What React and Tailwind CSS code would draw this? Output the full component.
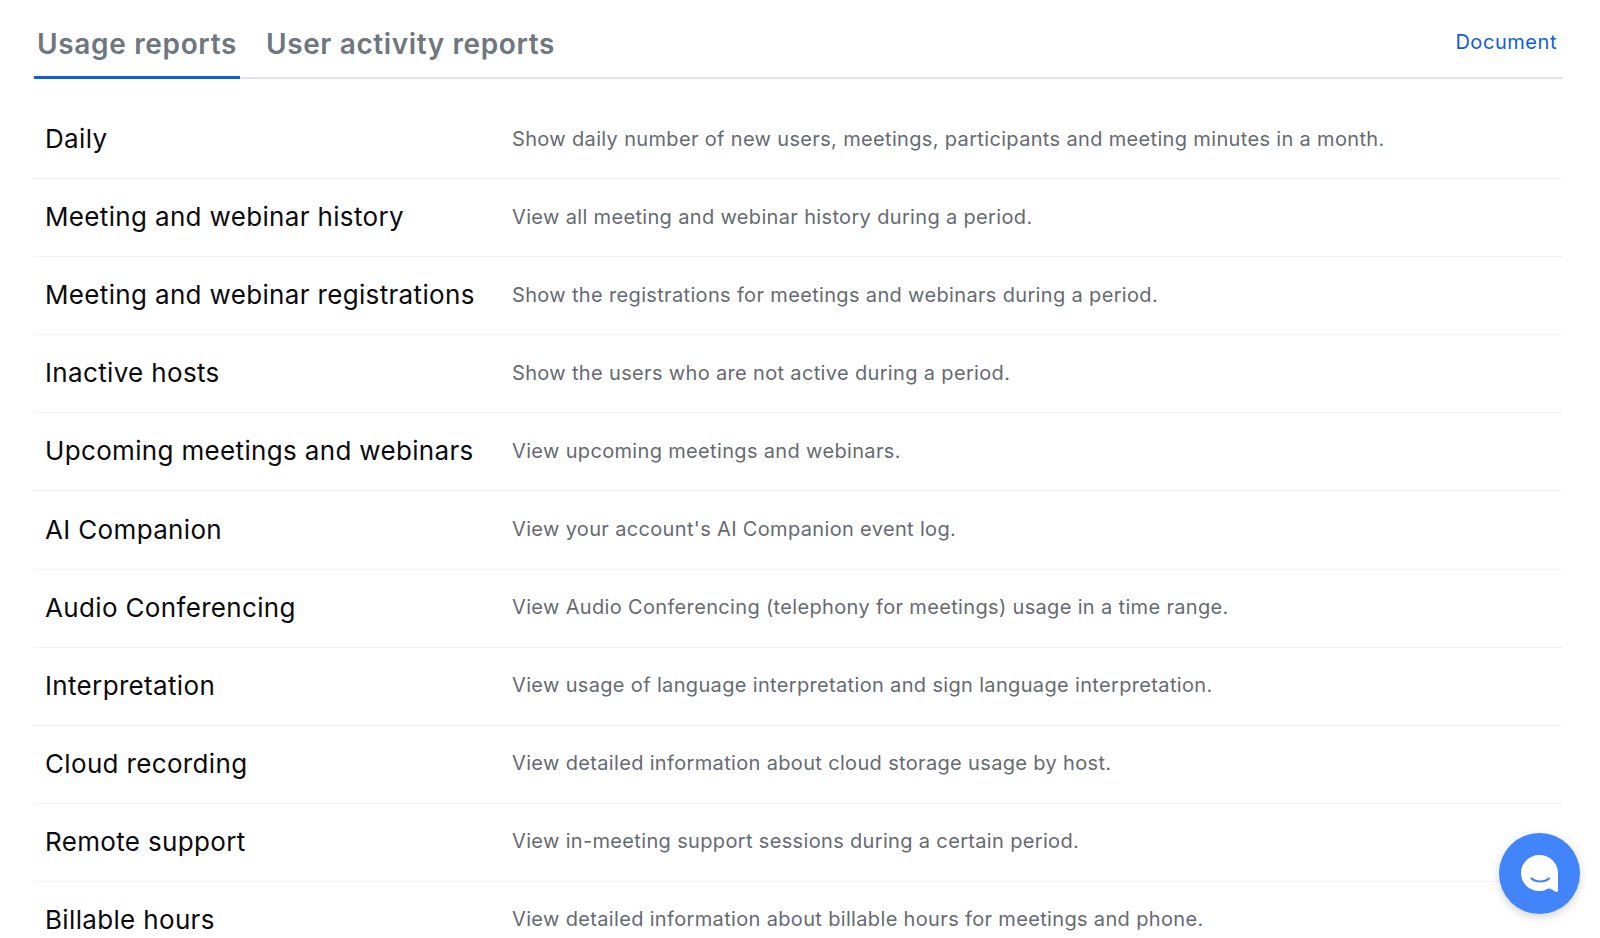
const rows = [
  ["Daily", "Show daily number of new users, meetings, participants and meeting minutes in a month."],
  ["Meeting and webinar history", "View all meeting and webinar history during a period."],
  ["Meeting and webinar registrations", "Show the registrations for meetings and webinars during a period."],
  ["Inactive hosts", "Show the users who are not active during a period."],
  ["Upcoming meetings and webinars", "View upcoming meetings and webinars."],
  ["AI Companion", "View your account's AI Companion event log."],
  ["Audio Conferencing", "View Audio Conferencing (telephony for meetings) usage in a time range."],
  ["Interpretation", "View usage of language interpretation and sign language interpretation."],
  ["Cloud recording", "View detailed information about cloud storage usage by host."],
  ["Remote support", "View in-meeting support sessions during a certain period."],
  ["Billable hours", "View detailed information about billable hours for meetings and phone."],
];

export default function App() {
  return (
    <div className="h-[938px] overflow-hidden bg-white font-['Inter','Liberation_Sans',sans-serif]">
      <div className="ml-[33px] w-[1530px]">
        <div className="flex h-[79px] items-stretch justify-between border-b-2 border-[#e4e4ed]">
          <div className="ml-[1px] flex gap-[23px]">
            <div className="-mb-[2px] flex items-center border-b-[3px] border-[#0e5fe0] px-[3px] pt-[12px] text-[28px] font-semibold leading-none tracking-[0.66px] text-[#6e7680]">Usage reports</div>
            <div className="flex items-center px-[3px] pt-[10px] text-[28px] font-semibold leading-none tracking-[0.6px] text-[#6e7680]">User activity reports</div>
          </div>
          <div className="pr-[6px] pt-[28px] text-[20px] leading-[28px] tracking-[0.55px] text-[#0e5fe0]">Document</div>
        </div>
        <div className="pt-[22px]">
          {rows.map(([t, d]) => (
            <div key={t} className="flex h-[78.1px] items-center border-b border-[#f2f2f5] pb-[1px]">
              <div className="w-[469px] pl-[12px] text-[26px] leading-none tracking-[0.34px] text-[#0b0b0f]">{t}</div>
              <div className="-mt-[1px] ml-[10px] text-[20px] leading-none tracking-[0.34px] text-[#666a72]">{d}</div>
            </div>
          ))}
        </div>
      </div>
      <div className="fixed left-[1499px] top-[833px] flex h-[81px] w-[81px] items-center justify-center rounded-full bg-[#4285fb] shadow-[0_3px_10px_rgba(0,0,0,0.18)]">
        <svg width="37" height="37" viewBox="0 0 37 37">
          <path d="M18.5 0C8.3 0 0 8 0 18s8 18 18 18c3 0 5.2-.6 7.2-1.6.7-.5 1.5-.9 2.5-.9h1c.6 0 1.1.3 1.6.7l4.2 2.5c1.2.6 2.5 0 2.5-1.4V18C37 8 28.7 0 18.5 0Z" fill="#fff" />
          <path d="M10.5 23.5c4.5 4 13 4 17.5 0" fill="none" stroke="#4285fb" strokeWidth="2.2" strokeLinecap="round" />
        </svg>
      </div>
    </div>
  );
}
